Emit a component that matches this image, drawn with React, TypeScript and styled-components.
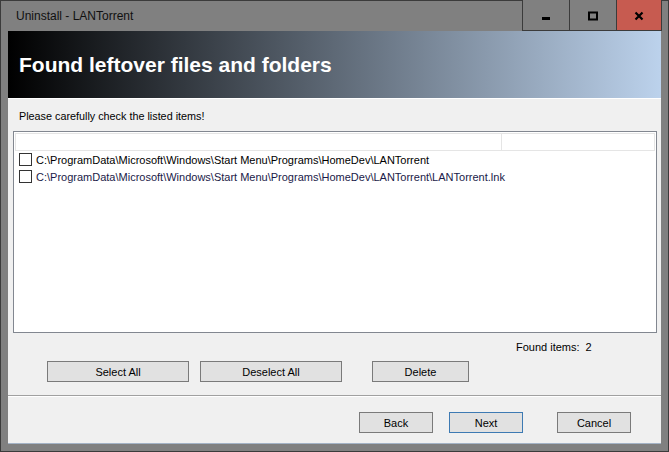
import { createGlobalStyle, styled } from "styled-components";

const GlobalStyle = createGlobalStyle`
  html, body {
    margin: 0;
    padding: 0;
    background: #ffffff;
  }
  * {
    box-sizing: border-box;
  }
`;

const ITEMS = [
  "C:\\ProgramData\\Microsoft\\Windows\\Start Menu\\Programs\\HomeDev\\LANTorrent",
  "C:\\ProgramData\\Microsoft\\Windows\\Start Menu\\Programs\\HomeDev\\LANTorrent\\LANTorrent.lnk",
];

const App = () => {
  return (
    <>
      <GlobalStyle />
      <Window>
        <TitleBar>
          <TitleText>Uninstall - LANTorrent</TitleText>
          <CaptionButtons>
            <CaptionButton>
              <svg width="10" height="10" viewBox="0 0 10 10">
                <rect x="1" y="6" width="8" height="3" fill="#000" />
              </svg>
            </CaptionButton>
            <CaptionButton>
              <svg width="10" height="10" viewBox="0 0 10 10">
                <rect x="1" y="1.5" width="8" height="7" fill="none" stroke="#000" strokeWidth="2" />
              </svg>
            </CaptionButton>
            <CaptionButton $close>
              <svg width="10" height="10" viewBox="0 0 10 10">
                <path d="M1.5 1.5 L8.5 8.5 M8.5 1.5 L1.5 8.5" stroke="#000" strokeWidth="2.2" />
              </svg>
            </CaptionButton>
          </CaptionButtons>
        </TitleBar>

        <Content>
          <Banner>
            <BannerTitle>Found leftover files and folders</BannerTitle>
          </Banner>

          <Hint>Please carefully check the listed items!</Hint>

          <ListBox>
            <ListHeader>
              <HeaderCell $w={487} />
              <HeaderCell />
            </ListHeader>
            {ITEMS.map((item, i) => (
              <ListRow key={item}>
                <CheckBox />
                <ItemText $dim={i === 1}>{item}</ItemText>
              </ListRow>
            ))}
          </ListBox>

          <FoundRow>
            <span>Found items:</span>
            <FoundCount>2</FoundCount>
          </FoundRow>

          <ActionRow>
            <PushButton $w={142}>Select All</PushButton>
            <PushButton $w={142}>Deselect All</PushButton>
            <PushButton $w={97} $ml={19}>
              Delete
            </PushButton>
          </ActionRow>

          <Separator />

          <NavRow>
            <PushButton $w={74}>Back</PushButton>
            <PushButton $w={74} $focused>
              Next
            </PushButton>
            <PushButton $w={74} $ml={18}>
              Cancel
            </PushButton>
          </NavRow>
        </Content>
      </Window>
    </>
  );
};

export default App;

const Window = styled.div`
  width: 669px;
  height: 452px;
  display: flex;
  flex-direction: column;
  background: #808080;
  border: 1px solid #3b3b3b;
  padding: 0 7px 7px 7px;
  font-family: "Liberation Sans", Arial, sans-serif;
  color: #000;
`;

const TitleBar = styled.div`
  height: 30px;
  display: flex;
  align-items: stretch;
  justify-content: space-between;
`;

const TitleText = styled.div`
  padding-left: 8px;
  display: flex;
  align-items: center;
  font-size: 12px;
  color: #101010;
`;

const CaptionButtons = styled.div`
  display: flex;
  margin-top: -1px;
`;

const CaptionButton = styled.div<{ $close?: boolean }>`
  width: 47px;
  height: 31px;
  display: flex;
  align-items: center;
  justify-content: center;
  background: ${({ $close }) => ($close ? "#c75b50" : "#808080")};
  border-left: 1px solid #3b3b3b;
  border-bottom: 1px solid #3b3b3b;
  ${({ $close }) => ($close ? "width: 46px; border-right: 1px solid #3b3b3b; margin-right: -1px;" : "")}

  svg {
    margin-top: 2px;
  }
`;

const Content = styled.div`
  flex: 1;
  display: flex;
  flex-direction: column;
  background: #f0f0f0;
  border-bottom: 1px solid #a4b3c6;
`;

const Banner = styled.div`
  height: 68px;
  display: flex;
  align-items: center;
  padding-left: 11px;
  padding-top: 1px;
  background: linear-gradient(to right, #000000 0%, #bcd2ec 100%);
  border-bottom: 1px solid #ffffff;
`;

const BannerTitle = styled.h1`
  margin: 0;
  font-size: 21px;
  font-weight: 700;
  color: #ffffff;
`;

const Hint = styled.div`
  height: 32px;
  padding: 10px 0 0 11px;
  font-size: 10.8px;
  line-height: 14px;
`;

const ListBox = styled.div`
  height: 202px;
  margin: 0 4px 0 5px;
  padding: 1px;
  background: #ffffff;
  border: 1px solid #828790;
`;

const ListHeader = styled.div`
  display: flex;
  height: 18px;
  border-bottom: 1px solid #e5e5e5;
`;

const HeaderCell = styled.div<{ $w?: number }>`
  ${({ $w }) => ($w ? `width: ${$w}px;` : "flex: 1;")}
  border-right: 1px solid #e5e5e5;
  border-top: 1px solid #e5e5e5;
  &:first-child {
    border-left: 1px solid #e5e5e5;
  }
`;

const ListRow = styled.div`
  height: 17px;
  display: flex;
  align-items: center;
  padding-left: 4px;
`;

const CheckBox = styled.span`
  width: 13px;
  height: 13px;
  border: 1px solid #333333;
  background: #ffffff;
  margin-right: 4px;
  flex: none;
`;

const ItemText = styled.span<{ $dim?: boolean }>`
  font-size: 11px;
  color: ${({ $dim }) => ($dim ? "#1a1a48" : "#000000")};
  white-space: nowrap;
`;

const FoundRow = styled.div`
  height: 28px;
  display: flex;
  align-items: center;
  padding-left: 508px;
  font-size: 11px;
`;

const FoundCount = styled.span`
  margin-left: 6px;
`;

const ActionRow = styled.div`
  display: flex;
  gap: 11px;
  padding-left: 39px;
`;

const PushButton = styled.div<{ $w: number; $ml?: number; $focused?: boolean }>`
  width: ${({ $w }) => $w}px;
  height: 21px;
  margin-left: ${({ $ml }) => $ml ?? 0}px;
  display: flex;
  align-items: center;
  justify-content: center;
  font-size: 11px;
  background: #e1e1e1;
  border: 1px solid ${({ $focused }) => ($focused ? "#3d7ab3" : "#7a7a7a")};
`;

const Separator = styled.div`
  margin-top: 13px;
  height: 2px;
  border-top: 1px solid #a0a0a0;
  border-bottom: 1px solid #ffffff;
`;

const NavRow = styled.div`
  display: flex;
  justify-content: flex-end;
  gap: 16px;
  padding-right: 30px;
  margin-top: 15px;
`;
